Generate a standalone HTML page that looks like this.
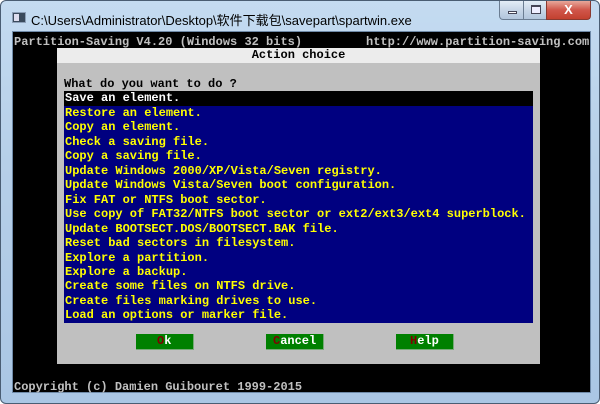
<!DOCTYPE html>
<html><head><meta charset="utf-8"><style>
*{margin:0;padding:0;box-sizing:border-box}
html,body{width:600px;height:404px;overflow:hidden;background:#fff}
.win{position:absolute;left:0;top:0;width:600px;height:404px;border:1px solid #4a5d73;border-radius:6px;background:linear-gradient(180deg,#c4dbf1 0%,#b6cfe8 40%,#aac6e4 100%)}
.title{position:absolute;left:30px;top:9px;font:13px "Liberation Sans","Noto Sans CJK SC",sans-serif;color:#000}
.ico{position:absolute;left:11px;top:11px;width:14px;height:11px;background:#3a4a5c;border:1px solid #8da0b8}
.ico:after{content:"";position:absolute;left:1px;top:1px;width:5px;height:7px;background:#dde}
.bt{position:absolute;top:0;height:19px;border:1px solid #6b7d92;border-top:none}
.mn{left:498px;width:25px;border-radius:0 0 0 4px;background:linear-gradient(#e3edf7,#c7d6e7 50%,#b2c6dc)}
.mx{left:522px;width:24px;background:linear-gradient(#e3edf7,#c7d6e7 50%,#b2c6dc)}
.cl{left:545px;width:45px;border-radius:0 0 4px 0;background:linear-gradient(#e7a89b,#d0564a 50%,#c3412f);border-color:#8a3a30}
.cl span{position:absolute;left:0;right:0;top:1px;text-align:center;color:#fff;font:bold 13px "Liberation Sans",sans-serif}
.con{position:absolute;left:11px;top:30px;width:579px;height:362px;background:#000;border:1px solid #6f8aa8}
.t{position:absolute;font:bold 12px/14.47px "Liberation Mono",monospace;white-space:pre;color:#c0c0c0}
.dlg{position:absolute;left:44px;top:16px;width:483px;height:316px;background:#c0c0c0}
.hd{position:absolute;left:0;top:0;width:483px;height:14.5px;background:#ececec;color:#000;text-align:center}
.lst{position:absolute;left:7px;top:43.4px;width:469px;height:231.5px;background:#000080;font:bold 12px/14.47px "Liberation Mono",monospace}
.lst div{height:14.47px;color:#ffff00;padding-left:1px;white-space:pre}
.lst div.s{background:#000;color:#fff}
.b{position:absolute;top:286px;width:58px;height:16px;background:#008000;color:#fff;border-right:1px solid #7a7;border-bottom:1px solid #7a7}
.b i{font-style:normal;color:#800000}
</style></head><body>
<div class="win">
<div class="ico"></div>
<div class="title">C:\Users\Administrator\Desktop\软件下载包\savepart\spartwin.exe</div>
<div class="bt mn"><div style="position:absolute;left:8px;top:10px;width:9px;height:3px;border:1px solid #445;background:#fff"></div></div>
<div class="bt mx"><div style="position:absolute;left:7px;top:4px;width:10px;height:9px;border:1px solid #445;border-top-width:2px;background:#eef"></div></div>
<div class="bt cl"><span>X</span></div>
<div class="con">
<div class="t" style="left:1px;top:3px;">Partition-Saving V4.20 (Windows 32 bits)</div>
<div class="t" style="left:353px;top:3px;">http://www.partition-saving.com</div>
<div class="dlg">
<div class="t hd">Action choice</div>
<div class="t" style="left:7px;top:28.9px;color:#000">What do you want to do ?</div>
<div class="lst"><div class="s">Save an element.</div><div>Restore an element.</div><div>Copy an element.</div><div>Check a saving file.</div><div>Copy a saving file.</div><div>Update Windows 2000/XP/Vista/Seven registry.</div><div>Update Windows Vista/Seven boot configuration.</div><div>Fix FAT or NTFS boot sector.</div><div>Use copy of FAT32/NTFS boot sector or ext2/ext3/ext4 superblock.</div><div>Update BOOTSECT.DOS/BOOTSECT.BAK file.</div><div>Reset bad sectors in filesystem.</div><div>Explore a partition.</div><div>Explore a backup.</div><div>Create some files on NTFS drive.</div><div>Create files marking drives to use.</div><div>Load an options or marker file.</div></div>
<div class="t b" style="left:79px;padding-left:21px"><i>O</i>k</div>
<div class="t b" style="left:209px;padding-left:7px"><i>C</i>ancel</div>
<div class="t b" style="left:339px;padding-left:14px"><i>H</i>elp</div>
</div>
<div class="t" style="left:1px;top:348px;">Copyright (c) Damien Guibouret 1999-2015</div>
</div>
</div>
</body></html>
